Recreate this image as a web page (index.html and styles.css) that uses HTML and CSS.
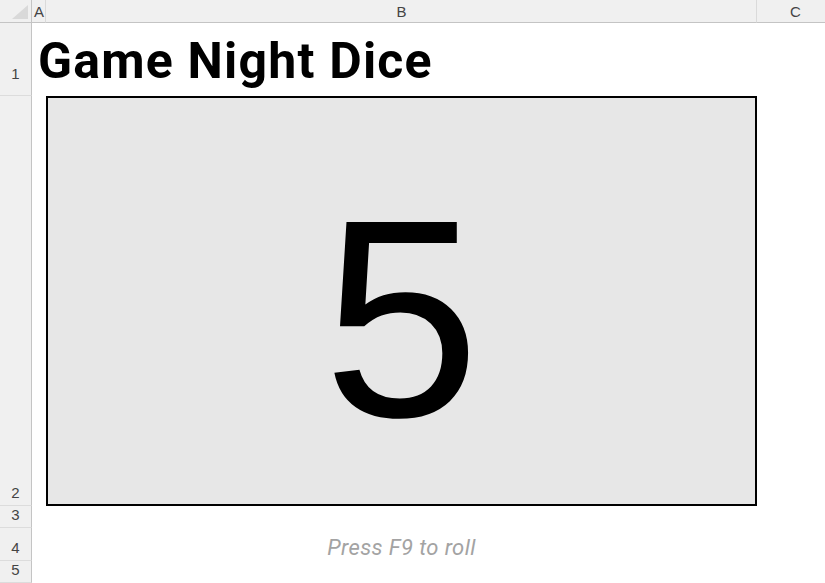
FILE: index.html
```html
<!DOCTYPE html>
<html lang="en">
<head>
    <meta charset="UTF-8">
    <meta name="viewport" content="width=device-width, initial-scale=1.0">
    <title>Game Night Dice</title>
    <link rel="stylesheet" href="styles.css">
</head>
<body>
    <div class="sheet">
        <!-- column headers -->
        <div class="corner">
            <svg width="16" height="14" viewBox="0 0 16 14"><polygon points="16,0 16,14 0,14" fill="#d9d9d9"/></svg>
        </div>
        <div class="col-head">A</div>
        <div class="col-head">B</div>
        <div class="col-head last">C</div>

        <!-- row 1 -->
        <div class="row-head first">1</div>
        <div class="cell title-row">
            <h1 class="title">Game Night Dice</h1>
        </div>

        <!-- row 2 -->
        <div class="row-head">2</div>
        <div class="cell"></div>
        <div class="cell">
            <div class="dice-box">
                <span id="dice-value">5</span>
            </div>
        </div>
        <div class="cell"></div>

        <!-- row 3 -->
        <div class="row-head">3</div>
        <div class="cell wide"></div>

        <!-- row 4 -->
        <div class="row-head">4</div>
        <div class="cell"></div>
        <div class="cell hint-cell">
            <span class="hint">Press F9 to roll</span>
        </div>
        <div class="cell"></div>

        <!-- row 5 -->
        <div class="row-head">5</div>
        <div class="cell wide"></div>
    </div>
</body>
</html>
```

FILE: styles.css
```css
html, body {
    margin: 0;
    padding: 0;
    background-color: #fff;
    overflow: hidden;
}

.sheet {
    display: grid;
    grid-template-columns: 32px 14px 711px 76px;
    grid-template-rows: 23px 73px 410px 22px 33px 22px;
    width: 825px;
    height: 583px;
    font-family: 'Liberation Sans', Arial, sans-serif;
}

.corner {
    background-color: #f0f0f0;
    border-bottom: 1px solid #c4c4c4;
    border-right: 1px solid #c4c4c4;
    display: flex;
    justify-content: flex-end;
    align-items: flex-end;
    padding: 0 3px 3px 0;
    box-sizing: border-box;
}

.col-head {
    background-color: #f0f0f0;
    border-bottom: 1px solid #c4c4c4;
    border-right: 1px solid #dadada;
    color: #444;
    font-size: 15px;
    display: flex;
    justify-content: center;
    align-items: center;
    padding: 1px 0 0 1px;
    box-sizing: border-box;
}

.col-head.last {
    border-right: none;
}

.row-head {
    grid-column: 1;
    background-color: #f0f0f0;
    border-right: 1px solid #c4c4c4;
    border-bottom: 1px solid #dcdcdc;
    color: #444;
    font-size: 15px;
    display: flex;
    justify-content: center;
    align-items: flex-end;
    padding-bottom: 4px;
    box-sizing: border-box;
}

.row-head.first {
    padding-bottom: 13px;
}

.cell {
    background-color: #fff;
}

.wide {
    grid-column: 2 / 5;
}

.title-row {
    grid-column: 2 / 5;
    display: flex;
    align-items: flex-end;
}

.title {
    margin: 0 0 10px 6px;
    font-family: 'Roboto', 'Liberation Sans', sans-serif;
    font-weight: 700;
    font-size: 50px;
    line-height: 1;
    color: #000;
    letter-spacing: 1.2px;
}

.dice-box {
    box-sizing: border-box;
    height: 100%;
    border: 2px solid #000;
    background-color: #e7e7e7;
    box-shadow: 1px 1px 0 #9a9a9a;
    display: flex;
    justify-content: center;
    align-items: center;
    padding-top: 36px;
}

#dice-value {
    font-family: 'Liberation Sans', Arial, sans-serif;
    font-size: 282px;
    line-height: 1;
    color: #000;
}

.hint-cell {
    display: flex;
    justify-content: center;
    align-items: flex-end;
    padding-bottom: 1px;
    box-sizing: border-box;
}

.hint {
    font-family: 'Roboto', 'Liberation Sans', sans-serif;
    font-style: italic;
    font-size: 22px;
    letter-spacing: 0.4px;
    color: #a3a3a3;
}
```
